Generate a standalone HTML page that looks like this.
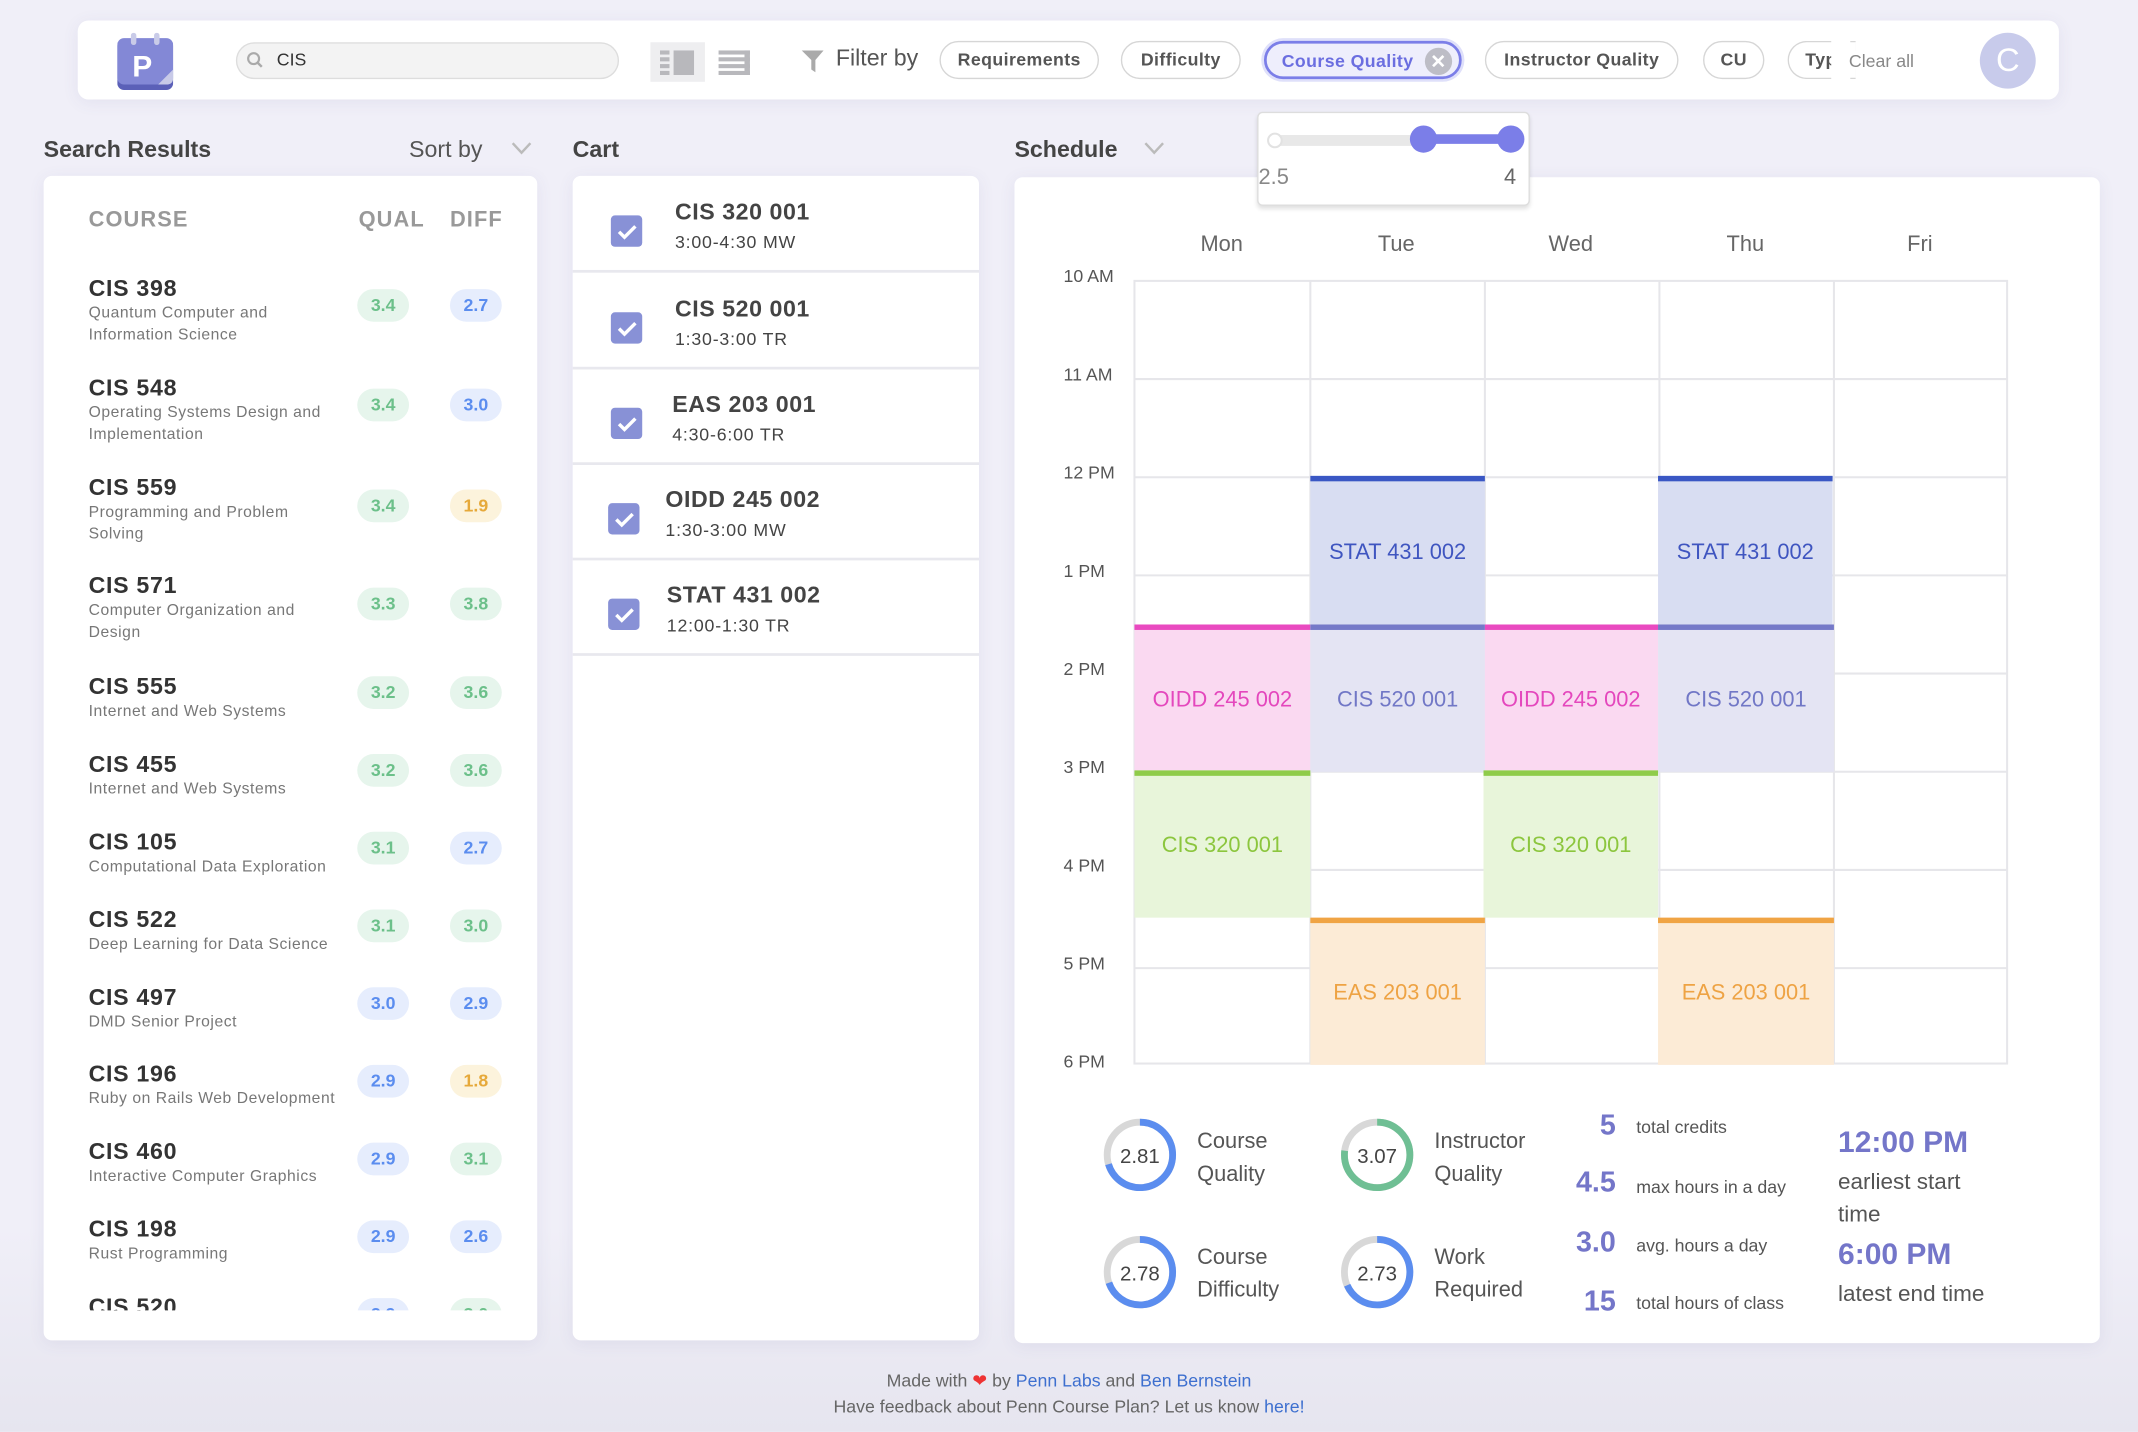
<!DOCTYPE html>
<html><head><meta charset="utf-8">
<style>
*{box-sizing:border-box;margin:0;padding:0}
html,body{width:2138px;height:1432px;overflow:hidden;background:#efeef7}
body{font-family:"Liberation Sans",sans-serif;color:#333}
#w{position:absolute;left:0;top:0;width:1568px;height:1050px;transform:scale(1.36352);transform-origin:0 0;background:linear-gradient(#f0eff8 0,#f0eff8 900px,#e6e5ef 1050px)}
.a{position:absolute}
.card{position:absolute;background:#fff;border-radius:6px;box-shadow:0 2px 12px rgba(80,80,140,.08)}
.pill{position:absolute;top:30px;height:28px;border:1.5px solid #d6d6d6;border-radius:14px;font-size:13px;font-weight:bold;color:#555;line-height:25px;text-align:center;letter-spacing:.3px}
.h{position:absolute;top:100px;font-size:17px;font-weight:bold;color:#444}
.row{position:absolute;left:65px;width:320px}
.row b{display:block;font-size:17px;color:#333;letter-spacing:.5px}
.row span{display:block;font-size:11.5px;color:#777;letter-spacing:.4px;line-height:16px;width:190px}
.bd{position:absolute;width:38px;height:24px;border-radius:12px;font-size:13px;font-weight:bold;text-align:center;line-height:24px}
.g{background:#e6f5ec;color:#6cc08a}.bl{background:#e6edfd;color:#5b8def}.y{background:#fcf3dc;color:#e6a93a}
.ci{position:absolute;left:420px;width:298px;height:70px;border-bottom:2px solid #e8e8ee}
.cb{position:absolute;left:28px;top:28px;width:23px;height:23px;background:#8891d6;border-radius:3px}
.ci b{position:absolute;left:75px;top:16px;font-size:17px;color:#444;letter-spacing:.4px}
.ci span{position:absolute;left:75px;top:40px;font-size:13px;color:#444;letter-spacing:.6px}
.day{position:absolute;top:171px;font-size:16px;color:#666;width:128px;text-align:center}
.tm{position:absolute;left:780px;font-size:13px;color:#555}
.ev{position:absolute;width:128px;text-align:center;font-size:16px;border-top:4px solid}
.st{position:absolute;font-size:16px;color:#555;line-height:24px}
.bn{position:absolute;font-size:21px;font-weight:bold;color:#7476c9;text-align:right;width:50px}
.sl{position:absolute;font-size:13px;color:#555}
</style></head><body><div id="w">

<div class="card" style="left:57px;top:15px;width:1453px;height:58px;border-radius:8px"></div>
<svg class="a" style="left:86px;top:24px" width="41" height="42" viewBox="0 0 41 42">
<rect x="0" y="5" width="41" height="37" rx="5" fill="#5b60b8"/>
<rect x="0" y="4" width="41" height="34" rx="5" fill="#8388d6"/>
<rect x="10" y="0" width="4" height="9" rx="2" fill="#c9cbe8"/><rect x="27" y="0" width="4" height="9" rx="2" fill="#c9cbe8"/>
<path d="M30 38 L41 27 L41 33 Q41 38 36 38Z" fill="#c8cae8"/>
<text x="11" y="32" font-family="Liberation Sans" font-weight="bold" font-size="22" fill="#fff">P</text></svg>
<div class="a" style="left:173px;top:31px;width:281px;height:27px;background:#f3f3f3;border:1.5px solid #ddd;border-radius:14px"></div>
<svg class="a" style="left:180px;top:37px" width="14" height="14"><circle cx="6" cy="6" r="4" fill="none" stroke="#aaa" stroke-width="1.6"/><line x1="9" y1="9" x2="12" y2="12" stroke="#aaa" stroke-width="1.8"/></svg>
<div class="a" style="left:203px;top:36px;font-size:13px;color:#333">CIS</div>
<div class="a" style="left:477px;top:31px;width:40px;height:29px;background:#eeeef0"></div>
<svg class="a" style="left:484px;top:35px" width="72" height="22">
<g fill="#b8b8bc"><rect x="0" y="2" width="7" height="3"/><rect x="0" y="7" width="7" height="3"/><rect x="0" y="12" width="7" height="3"/><rect x="0" y="17" width="7" height="3"/><rect x="10" y="2" width="15" height="18"/>
<rect x="43" y="2" width="23" height="3"/><rect x="43" y="7" width="23" height="3"/><rect x="43" y="12" width="23" height="3"/><rect x="43" y="17" width="23" height="3"/><rect x="62" y="2" width="4" height="18"/></g></svg>
<svg class="a" style="left:587px;top:36px" width="18" height="18"><path d="M1 1 H17 L11 8 V17 L8 15 V8 Z" fill="#aaa"/></svg>
<div class="a" style="left:613px;top:33px;font-size:17px;color:#555">Filter by</div>
<div class="pill" style="left:689px;width:117px">Requirements</div>
<div class="pill" style="left:822px;width:88px">Difficulty</div>
<div class="pill" style="left:927px;width:145px;border:2px solid #7b7ee8;background:#eeeefc;color:#6b6ee0;box-shadow:0 0 0 2px #dfe0fa;text-align:left;padding-left:11px">Course Quality<span style="position:absolute;right:5px;top:3px;width:20px;height:20px;border-radius:10px;background:#bdbdc6;color:#fff;font-size:14px;line-height:20px;text-align:center">✕</span></div>
<div class="pill" style="left:1089px;width:142px">Instructor Quality</div>
<div class="pill" style="left:1249px;width:45px">CU</div>
<div class="pill" style="left:1311px;width:50px;border-right:none;border-radius:14px 0 0 14px;text-align:left;padding-left:12px;overflow:hidden">Typ</div>
<div class="a" style="left:1343px;top:30px;width:14px;height:28px;background:#fff"></div>
<div class="a" style="left:1356px;top:37px;font-size:13px;color:#888">Clear all</div>
<div class="a" style="left:1452px;top:24px;width:41px;height:41px;border-radius:50%;background:#c8cbeb;color:#fff;font-size:24px;text-align:center;line-height:41px">C</div>

<div class="h" style="left:32px">Search Results</div>
<div class="a" style="left:300px;top:100px;font-size:17px;color:#555">Sort by</div>
<svg class="a" style="left:375px;top:104px" width="15" height="10"><path d="M1 1 L7.5 8 L14 1" fill="none" stroke="#bbb" stroke-width="1.8"/></svg>
<div class="h" style="left:420px">Cart</div>
<div class="h" style="left:744px">Schedule</div>
<svg class="a" style="left:839px;top:104px" width="15" height="10"><path d="M1 1 L7.5 8 L14 1" fill="none" stroke="#bbb" stroke-width="1.8"/></svg>

<div class="card" style="left:32px;top:129px;width:362px;height:854px;overflow:hidden">
</div>
<div class="a" style="left:32px;top:129px;width:362px;height:832px;overflow:hidden">
<div style="position:relative;left:-32px;top:-129px">
<div class="a" style="left:65px;top:153px;font-size:16px;font-weight:bold;color:#999;letter-spacing:.8px">COURSE</div>
<div class="a" style="left:263px;top:153px;font-size:16px;font-weight:bold;color:#999;letter-spacing:.8px">QUAL</div>
<div class="a" style="left:330px;top:153px;font-size:16px;font-weight:bold;color:#999;letter-spacing:.8px">DIFF</div>

<div class="row" style="top:202px"><b>CIS 398</b><span>Quantum Computer and Information Science</span></div>
<div class="bd g" style="left:262px;top:212px">3.4</div><div class="bd bl" style="left:330px;top:212px">2.7</div>
<div class="row" style="top:275px"><b>CIS 548</b><span>Operating Systems Design and Implementation</span></div>
<div class="bd g" style="left:262px;top:285px">3.4</div><div class="bd bl" style="left:330px;top:285px">3.0</div>
<div class="row" style="top:348px"><b>CIS 559</b><span>Programming and Problem Solving</span></div>
<div class="bd g" style="left:262px;top:359px">3.4</div><div class="bd y" style="left:330px;top:359px">1.9</div>
<div class="row" style="top:420px"><b>CIS 571</b><span>Computer Organization and Design</span></div>
<div class="bd g" style="left:262px;top:431px">3.3</div><div class="bd g" style="left:330px;top:431px">3.8</div>
<div class="row" style="top:494px"><b>CIS 555</b><span style="width:260px">Internet and Web Systems</span></div>
<div class="bd g" style="left:262px;top:496px">3.2</div><div class="bd g" style="left:330px;top:496px">3.6</div>
<div class="row" style="top:551px"><b>CIS 455</b><span style="width:260px">Internet and Web Systems</span></div>
<div class="bd g" style="left:262px;top:553px">3.2</div><div class="bd g" style="left:330px;top:553px">3.6</div>
<div class="row" style="top:608px"><b>CIS 105</b><span style="width:260px">Computational Data Exploration</span></div>
<div class="bd g" style="left:262px;top:610px">3.1</div><div class="bd bl" style="left:330px;top:610px">2.7</div>
<div class="row" style="top:665px"><b>CIS 522</b><span style="width:260px">Deep Learning for Data Science</span></div>
<div class="bd g" style="left:262px;top:667px">3.1</div><div class="bd g" style="left:330px;top:667px">3.0</div>
<div class="row" style="top:722px"><b>CIS 497</b><span style="width:260px">DMD Senior Project</span></div>
<div class="bd bl" style="left:262px;top:724px">3.0</div><div class="bd bl" style="left:330px;top:724px">2.9</div>
<div class="row" style="top:778px"><b>CIS 196</b><span style="width:260px">Ruby on Rails Web Development</span></div>
<div class="bd bl" style="left:262px;top:781px">2.9</div><div class="bd y" style="left:330px;top:781px">1.8</div>
<div class="row" style="top:835px"><b>CIS 460</b><span style="width:260px">Interactive Computer Graphics</span></div>
<div class="bd bl" style="left:262px;top:838px">2.9</div><div class="bd g" style="left:330px;top:838px">3.1</div>
<div class="row" style="top:892px"><b>CIS 198</b><span style="width:260px">Rust Programming</span></div>
<div class="bd bl" style="left:262px;top:895px">2.9</div><div class="bd bl" style="left:330px;top:895px">2.6</div>
<div class="row" style="top:949px"><b>CIS 520</b></div>
<div class="bd bl" style="left:262px;top:952px">2.9</div><div class="bd g" style="left:330px;top:952px">3.0</div>
</div></div>

<div class="card" style="left:420px;top:129px;width:298px;height:854px"></div>
<div class="ci" style="top:130px"><div class="cb"></div><svg class="a" style="left:32px;top:33px" width="16" height="14"><path d="M2 7 L6 11 L14 3" fill="none" stroke="#fff" stroke-width="2.5"/></svg><b>CIS 320 001</b><span>3:00-4:30 MW</span></div>
<div class="ci" style="top:201px"><div class="cb"></div><svg class="a" style="left:32px;top:33px" width="16" height="14"><path d="M2 7 L6 11 L14 3" fill="none" stroke="#fff" stroke-width="2.5"/></svg><b>CIS 520 001</b><span>1:30-3:00 TR</span></div>
<div class="ci" style="top:271px"><div class="cb"></div><svg class="a" style="left:32px;top:33px" width="16" height="14"><path d="M2 7 L6 11 L14 3" fill="none" stroke="#fff" stroke-width="2.5"/></svg><b style="left:73px">EAS 203 001</b><span style="left:73px">4:30-6:00 TR</span></div>
<div class="ci" style="top:341px"><div class="cb" style="left:26px"></div><svg class="a" style="left:30px;top:33px" width="16" height="14"><path d="M2 7 L6 11 L14 3" fill="none" stroke="#fff" stroke-width="2.5"/></svg><b style="left:68px">OIDD 245 002</b><span style="left:68px">1:30-3:00 MW</span></div>
<div class="ci" style="top:411px"><div class="cb" style="left:26px"></div><svg class="a" style="left:30px;top:33px" width="16" height="14"><path d="M2 7 L6 11 L14 3" fill="none" stroke="#fff" stroke-width="2.5"/></svg><b style="left:69px">STAT 431 002</b><span style="left:69px">12:00-1:30 TR</span></div>

<div class="card" style="left:744px;top:130px;width:796px;height:855px"></div>
<div class="day" style="left:832px">Mon</div><div class="day" style="left:960px">Tue</div><div class="day" style="left:1088px">Wed</div><div class="day" style="left:1216px">Thu</div><div class="day" style="left:1344px">Fri</div>
<div class="tm" style="top:195px">10 AM</div><div class="tm" style="top:267px">11 AM</div><div class="tm" style="top:339px">12 PM</div><div class="tm" style="top:411px">1 PM</div><div class="tm" style="top:483px">2 PM</div><div class="tm" style="top:555px">3 PM</div><div class="tm" style="top:627px">4 PM</div><div class="tm" style="top:699px">5 PM</div><div class="tm" style="top:771px">6 PM</div>
<svg class="a" style="left:830px;top:204px" width="646" height="580">
<g stroke="#e6e6ea" stroke-width="1.5" fill="none">
<rect x="2" y="2" width="640" height="574"/>
<line x1="2" y1="74" x2="642" y2="74"/><line x1="2" y1="146" x2="642" y2="146"/><line x1="2" y1="218" x2="642" y2="218"/><line x1="2" y1="290" x2="642" y2="290"/><line x1="2" y1="362" x2="642" y2="362"/><line x1="2" y1="434" x2="642" y2="434"/><line x1="2" y1="506" x2="642" y2="506"/>
<line x1="131" y1="2" x2="131" y2="576"/><line x1="259" y1="2" x2="259" y2="576"/><line x1="387" y1="2" x2="387" y2="576"/><line x1="515" y1="2" x2="515" y2="576"/>
</g></svg>
<div class="ev" style="left:961px;top:349px;height:109px;background:#d8ddf2;border-color:#3a57c4;color:#3f55c0;line-height:105px">STAT 431 002</div>
<div class="ev" style="left:1216px;top:349px;height:109px;background:#d8ddf2;border-color:#3a57c4;color:#3f55c0;line-height:105px">STAT 431 002</div>
<div class="ev" style="left:832px;top:458px;height:108px;width:129px;background:#fad9f1;border-color:#e94ac0;color:#e447bd;line-height:104px">OIDD 245 002</div>
<div class="ev" style="left:1088px;top:458px;height:108px;background:#fad9f1;border-color:#e94ac0;color:#e447bd;line-height:104px">OIDD 245 002</div>
<div class="ev" style="left:961px;top:458px;height:108px;background:#e4e4f3;border-color:#7579c8;color:#7177c6;line-height:104px">CIS 520 001</div>
<div class="ev" style="left:1216px;top:458px;height:108px;width:129px;background:#e4e4f3;border-color:#7579c8;color:#7177c6;line-height:104px">CIS 520 001</div>
<div class="ev" style="left:832px;top:565px;height:108px;width:129px;background:#e8f5da;border-color:#8fcc4a;color:#8cc63e;line-height:104px">CIS 320 001</div>
<div class="ev" style="left:1088px;top:565px;height:108px;background:#e8f5da;border-color:#8fcc4a;color:#8cc63e;line-height:104px">CIS 320 001</div>
<div class="ev" style="left:961px;top:673px;height:108px;background:#fcebd6;border-color:#f0a444;color:#eea344;line-height:104px">EAS 203 001</div>
<div class="ev" style="left:1216px;top:673px;height:108px;width:129px;background:#fcebd6;border-color:#f0a444;color:#eea344;line-height:104px">EAS 203 001</div>

<div class="a" style="left:922px;top:82px;width:200px;height:69px;background:#fff;border:1.5px solid #ddd;border-radius:4px;box-shadow:0 2px 3px rgba(0,0,0,.12)"></div>
<svg class="a" style="left:926px;top:90px" width="196" height="26"><rect x="6" y="9" width="120" height="8" rx="4" fill="#e8e8e8"/><circle cx="9" cy="13" r="5" fill="#fff" stroke="#e2e2e2" stroke-width="1.5"/><line x1="118" y1="12" x2="182" y2="12" stroke="#7b7ee8" stroke-width="7"/><circle cx="118" cy="12" r="10" fill="#7b7ee8"/><circle cx="182" cy="12" r="10" fill="#7b7ee8"/></svg>
<div class="a" style="left:923px;top:122px;font-size:16px;color:#888">2.5</div>
<div class="a" style="left:1103px;top:122px;font-size:16px;color:#666">4</div>

<svg class="a" style="left:806px;top:817px" width="240" height="150" font-family="Liberation Sans" font-size="15">
<g fill="none" stroke-width="5">
<circle cx="30" cy="30" r="24" stroke="#d8d8d8"/><circle cx="30" cy="30" r="24" stroke="#5b8def" stroke-dasharray="106 151" transform="rotate(-90 30 30)"/>
<circle cx="204" cy="30" r="24" stroke="#d8d8d8"/><circle cx="204" cy="30" r="24" stroke="#6fbf94" stroke-dasharray="116 151" transform="rotate(-90 204 30)"/>
<circle cx="30" cy="116" r="24" stroke="#d8d8d8"/><circle cx="30" cy="116" r="24" stroke="#5b8def" stroke-dasharray="105 151" transform="rotate(-90 30 116)"/>
<circle cx="204" cy="116" r="24" stroke="#d8d8d8"/><circle cx="204" cy="116" r="24" stroke="#5b8def" stroke-dasharray="103 151" transform="rotate(-90 204 116)"/>
</g>
<g fill="#444" text-anchor="middle"><text x="30" y="36">2.81</text><text x="204" y="36">3.07</text><text x="30" y="122">2.78</text><text x="204" y="122">2.73</text></g>
</svg>
<div class="st" style="left:878px;top:826px">Course<br>Quality</div>
<div class="st" style="left:1052px;top:826px">Instructor<br>Quality</div>
<div class="st" style="left:878px;top:911px">Course<br>Difficulty</div>
<div class="st" style="left:1052px;top:911px">Work<br>Required</div>
<div class="bn" style="left:1135px;top:814px">5</div><div class="sl" style="left:1200px;top:819px">total credits</div>
<div class="bn" style="left:1135px;top:856px">4.5</div><div class="sl" style="left:1200px;top:863px">max hours in a day</div>
<div class="bn" style="left:1135px;top:900px">3.0</div><div class="sl" style="left:1200px;top:906px">avg. hours a day</div>
<div class="bn" style="left:1135px;top:943px">15</div><div class="sl" style="left:1200px;top:948px">total hours of class</div>
<div class="a" style="left:1348px;top:825px;font-size:22px;font-weight:bold;color:#7476c9">12:00 PM</div>
<div class="st" style="left:1348px;top:855px;font-size:16.5px">earliest start<br>time</div>
<div class="a" style="left:1348px;top:907px;font-size:22px;font-weight:bold;color:#7476c9">6:00 PM</div>
<div class="st" style="left:1348px;top:937px;font-size:16.5px">latest end time</div>

<div class="a" style="left:0;top:1003px;width:1568px;text-align:center;font-size:13px;color:#666;line-height:19px">Made with <span style="color:#e33">❤</span> by <span style="color:#3d6fcf">Penn Labs</span> and <span style="color:#3d6fcf">Ben Bernstein</span><br>Have feedback about Penn Course Plan? Let us know <span style="color:#3d6fcf">here!</span></div>
</div></body></html>
